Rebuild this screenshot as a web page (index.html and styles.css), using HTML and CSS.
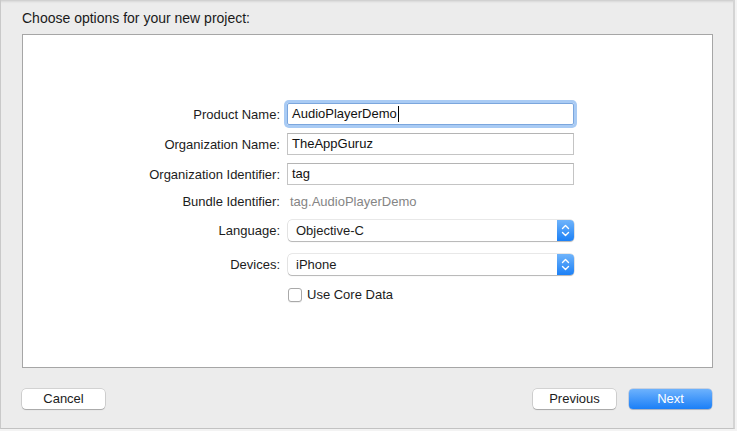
FILE: index.html
```html
<!DOCTYPE html>
<html>
<head>
<meta charset="utf-8">
<link rel="stylesheet" href="styles.css">
</head>
<body>
<div class="sheet">
  <div class="title">Choose options for your new project:</div>
  <div class="panel">
    <div class="form">
      <div class="row r1">
        <label class="lbl">Product Name:</label>
        <div class="field focus">AudioPlayerDemo<span class="caret"></span></div>
      </div>
      <div class="row r2">
        <label class="lbl">Organization Name:</label>
        <div class="field">TheAppGuruz</div>
      </div>
      <div class="row r3">
        <label class="lbl">Organization Identifier:</label>
        <div class="field">tag</div>
      </div>
      <div class="row r4">
        <label class="lbl">Bundle Identifier:</label>
        <div class="static">tag.AudioPlayerDemo</div>
      </div>
      <div class="row r5">
        <label class="lbl">Language:</label>
        <div class="popup"><span class="ptext">Objective-C</span><span class="stepper"><svg width="9" height="13" viewBox="0 0 9 13"><path d="M1.5 4.5 L4.5 1.5 L7.5 4.5 M1.5 8.5 L4.5 11.5 L7.5 8.5" fill="none" stroke="#fff" stroke-width="1.4" stroke-linecap="round" stroke-linejoin="round"/></svg></span></div>
      </div>
      <div class="row r6">
        <label class="lbl">Devices:</label>
        <div class="popup"><span class="ptext">iPhone</span><span class="stepper"><svg width="9" height="13" viewBox="0 0 9 13"><path d="M1.5 4.5 L4.5 1.5 L7.5 4.5 M1.5 8.5 L4.5 11.5 L7.5 8.5" fill="none" stroke="#fff" stroke-width="1.4" stroke-linecap="round" stroke-linejoin="round"/></svg></span></div>
      </div>
      <div class="row r7">
        <span class="lbl"></span>
        <div class="check"><span class="box"></span><span class="ctext">Use Core Data</span></div>
      </div>
    </div>
  </div>
  <div class="footer">
    <button class="btn">Cancel</button>
    <div class="spacer"></div>
    <button class="btn">Previous</button>
    <button class="btn primary">Next</button>
  </div>
</div>
</body>
</html>
```

FILE: styles.css
```css
html, body {
  margin: 0;
  padding: 0;
}
body {
  background: #f3f3f3;
  width: 737px;
  height: 431px;
  overflow: hidden;
  font-family: "Liberation Sans", Arial, sans-serif;
  font-size: 13px;
  color: #1c1c1c;
}
.sheet {
  box-sizing: border-box;
  width: 735px;
  height: 429px;
  background: #ececec;
  border-left: 1px solid #c9c9c9;
  border-right: 2px solid #d4d4d4;
  border-bottom: 1px solid #c2c2c2;
  box-shadow: inset 0 4px 3px -3px rgba(0,0,0,0.18);
  padding: 0 0 0 21px;
  display: flex;
  flex-direction: column;
}
.title {
  height: 34px;
  padding-top: 10px;
  box-sizing: border-box;
  font-size: 14px;
  line-height: 17px;
  color: #1a1a1a;
  flex: none;
}
.panel {
  box-sizing: border-box;
  width: 691px;
  height: 334px;
  background: #fff;
  border: 1px solid #a6a6a6;
  flex: none;
}
.form {
  display: flex;
  flex-direction: column;
  padding-top: 68px;
}
.row {
  display: flex;
  align-items: center;
  height: 22px;
}
.r2, .r3 { margin-top: 8px; }
.r4 { margin-top: 5px; }
.r5 { margin-top: 8px; height: 21px; }
.r6 { margin-top: 13px; height: 21px; }
.r7 { margin-top: 12px; height: 15px; }
.lbl {
  width: 257px;
  text-align: right;
  margin-right: 7px;
  color: #1c1c1c;
  flex: none;
}
.field {
  box-sizing: border-box;
  width: 287px;
  height: 22px;
  border: 1px solid #c4c4c4;
  border-top-color: #b4b4b4;
  padding-left: 4px;
  line-height: 20px;
  color: #111;
  display: flex;
  align-items: center;
}
.field.focus {
  border-color: #7ba6dd;
  box-shadow: 0 0 0 3px #a9cbf4;
  border-radius: 2px;
}
.caret {
  display: inline-block;
  width: 1px;
  height: 16px;
  background: #000;
  margin-left: 1px;
}
.static {
  padding-left: 3px;
  color: #858585;
}
.popup {
  box-sizing: border-box;
  width: 286px;
  height: 21px;
  margin-left: 1px;
  background: #fff;
  border-radius: 4px;
  box-shadow: 0 0 0 0.5px rgba(0,0,0,0.18), 0 1px 1px rgba(0,0,0,0.22);
  display: flex;
  align-items: center;
  overflow: hidden;
}
.ptext {
  flex: 1;
  padding-left: 8px;
  color: #1c1c1c;
}
.stepper {
  width: 17px;
  height: 21px;
  background: linear-gradient(#6fb4fb, #1c80f6);
  display: flex;
  align-items: center;
  justify-content: center;
  flex: none;
}
.check {
  display: flex;
  align-items: center;
  margin-left: 1px;
}
.box {
  box-sizing: border-box;
  width: 14px;
  height: 14px;
  border: 1px solid #a9a9a9;
  border-radius: 3px;
  background: #fff;
  box-shadow: 0 1px 0 rgba(0,0,0,0.06);
}
.ctext {
  margin-left: 5px;
}
.footer {
  display: flex;
  align-items: flex-start;
  padding-top: 21px;
  width: 690px;
  flex: none;
}
.spacer { flex: 1; }
.btn {
  box-sizing: border-box;
  width: 83px;
  height: 20px;
  background: #fff;
  border: none;
  border-radius: 4px;
  box-shadow: 0 0 0 0.5px rgba(0,0,0,0.22), 0 1px 1px rgba(0,0,0,0.2);
  font-family: "Liberation Sans", Arial, sans-serif;
  font-size: 13px;
  color: #1c1c1c;
  padding: 0;
  line-height: 20px;
  margin: 0;
}
.btn + .btn { margin-left: 13px; }
.btn.primary {
  background: linear-gradient(#6db2fd, #1b7ff7);
  color: #fff;
  box-shadow: 0 0 0 0.5px rgba(0,60,160,0.3), 0 1px 1px rgba(0,0,0,0.15);
}
```
